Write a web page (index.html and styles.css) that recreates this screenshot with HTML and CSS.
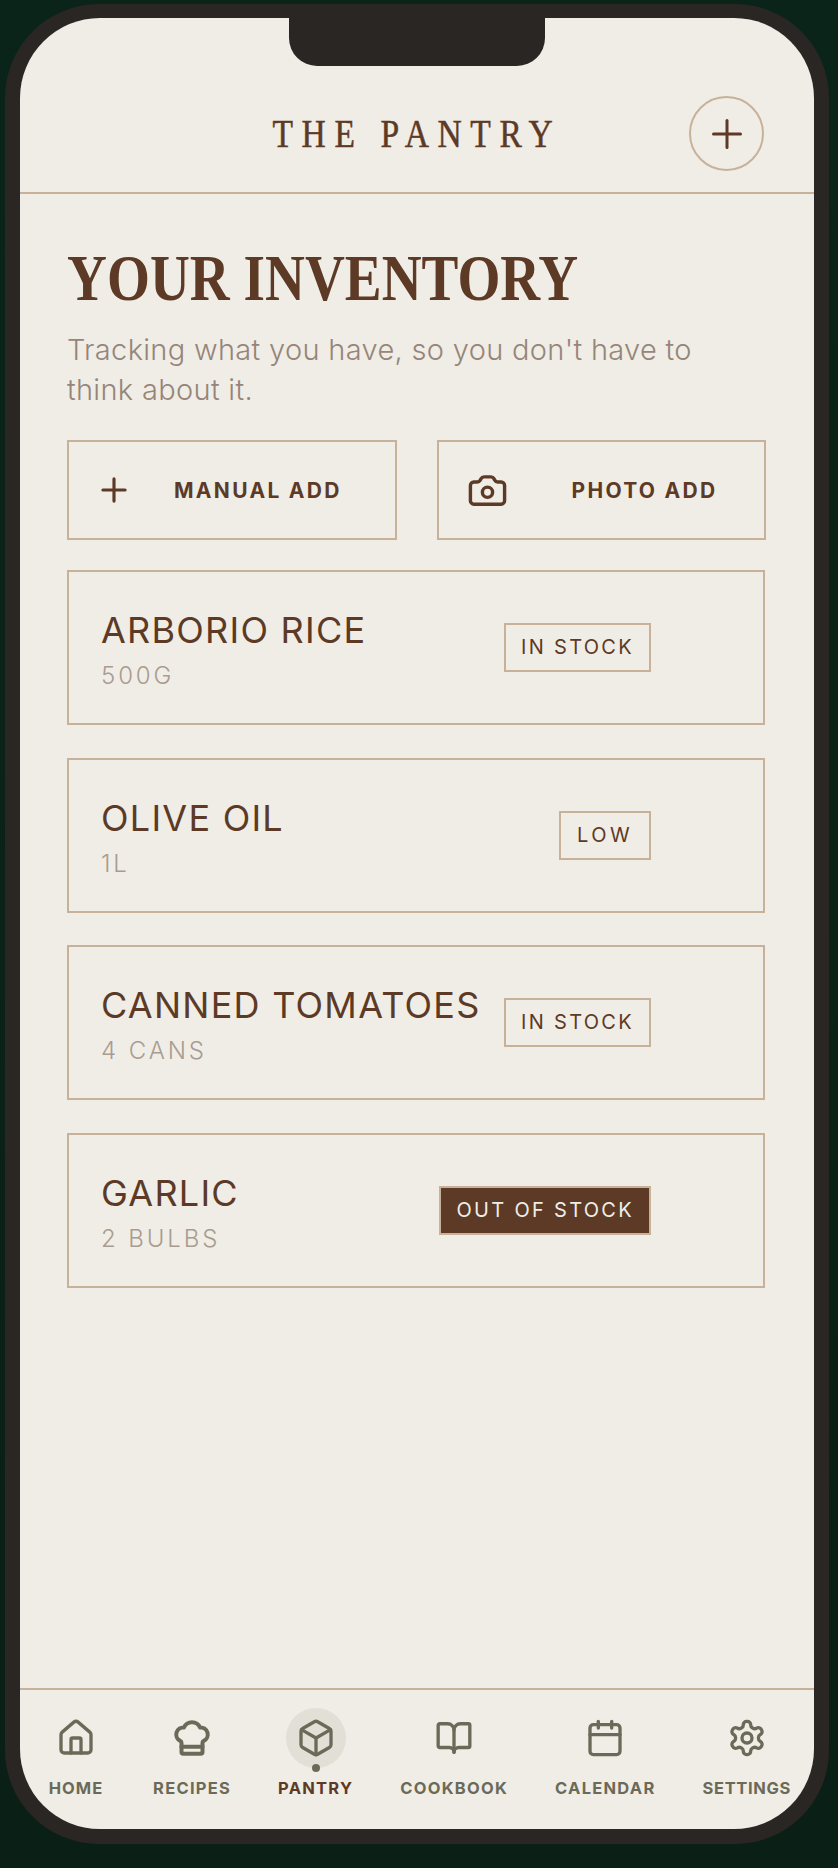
FILE: index.html
```html
<!DOCTYPE html>
<html lang="en">
<head>
  <meta charset="UTF-8" />
  <meta name="viewport" content="width=device-width, initial-scale=1" />
  <title>The Pantry</title>
  <link rel="stylesheet" href="styles.css">
</head>
<body>
  <div class="phone">
    <div class="screen">
      <div class="notch" aria-hidden="true"></div>

      <header class="top-bar">
        <div class="brand">THE PANTRY</div>
        <button class="round-add" aria-label="Add">
          <svg class="icon" viewBox="0 0 24 24"><path d="M3 12h18"/><path d="M12 3v18"/></svg>
        </button>
      </header>

      <main class="content">
        <h1 class="page-title">YOUR INVENTORY</h1>
        <p class="page-lead">Tracking what you have, so you don't have to think about it.</p>

        <div class="actions">
          <button class="action-btn manual-btn">
            <svg class="icon plus-icon" viewBox="0 0 24 24"><path d="M5 12h14"/><path d="M12 5v14"/></svg>
            <span>MANUAL ADD</span>
          </button>
          <button class="action-btn photo-btn">
            <svg class="icon camera-icon" viewBox="0 0 24 24"><path d="M13.997 4a2 2 0 0 1 1.76 1.05l.486.9A2 2 0 0 0 18.003 7H20a2 2 0 0 1 2 2v9a2 2 0 0 1-2 2H4a2 2 0 0 1-2-2V9a2 2 0 0 1 2-2h1.997a2 2 0 0 0 1.759-1.048l.489-.904A2 2 0 0 1 10.004 4z"/><circle cx="12" cy="13" r="3"/></svg>
            <span>PHOTO ADD</span>
          </button>
        </div>

        <div class="items">
          <div class="item-card">
            <div class="item-info">
              <div class="item-name">ARBORIO RICE</div>
              <div class="item-qty">500G</div>
            </div>
            <span class="badge">IN STOCK</span>
          </div>
          <div class="item-card">
            <div class="item-info">
              <div class="item-name">OLIVE OIL</div>
              <div class="item-qty">1L</div>
            </div>
            <span class="badge badge-low">LOW</span>
          </div>
          <div class="item-card">
            <div class="item-info">
              <div class="item-name">CANNED TOMATOES</div>
              <div class="item-qty">4 CANS</div>
            </div>
            <span class="badge">IN STOCK</span>
          </div>
          <div class="item-card">
            <div class="item-info">
              <div class="item-name">GARLIC</div>
              <div class="item-qty">2 BULBS</div>
            </div>
            <span class="badge badge-out">OUT OF STOCK</span>
          </div>
        </div>
      </main>

      <nav class="tab-bar">
        <a class="tab tab-home">
          <span class="tab-icon">
            <svg class="icon" viewBox="0 0 24 24"><path d="M15 21v-8a1 1 0 0 0-1-1h-4a1 1 0 0 0-1 1v8"/><path d="M3 10a2 2 0 0 1 .709-1.528l7-5.999a2 2 0 0 1 2.582 0l7 5.999A2 2 0 0 1 21 10v9a2 2 0 0 1-2 2H5a2 2 0 0 1-2-2z"/></svg>
          </span>
          <span class="tab-label">HOME</span>
        </a>
        <a class="tab">
          <span class="tab-icon">
            <svg class="icon hat-icon" viewBox="0 0 24 24"><path d="M17 21a1 1 0 0 0 1-1v-5.35c0-.457.316-.844.727-1.041a4 4 0 0 0-2.134-7.589 5 5 0 0 0-9.186 0 4 4 0 0 0-2.134 7.588c.411.198.727.585.727 1.041V20a1 1 0 0 0 1 1Z"/><path d="M6 17h12"/></svg>
          </span>
          <span class="tab-label">RECIPES</span>
        </a>
        <a class="tab tab-active">
          <span class="tab-icon">
            <svg class="icon" viewBox="0 0 24 24"><path d="M21 8a2 2 0 0 0-1-1.73l-7-4a2 2 0 0 0-2 0l-7 4A2 2 0 0 0 3 8v8a2 2 0 0 0 1 1.73l7 4a2 2 0 0 0 2 0l7-4A2 2 0 0 0 21 16Z"/><path d="m3.3 7 8.7 5 8.7-5"/><path d="M12 22V12"/></svg>
          </span>
          <span class="tab-label">PANTRY</span>
        </a>
        <a class="tab">
          <span class="tab-icon">
            <svg class="icon book-icon" viewBox="0 0 24 24"><path d="M12 7v14"/><path d="M3 18a1 1 0 0 1-1-1V4a1 1 0 0 1 1-1h5a4 4 0 0 1 4 4 4 4 0 0 1 4-4h5a1 1 0 0 1 1 1v13a1 1 0 0 1-1 1h-6a3 3 0 0 0-3 3 3 3 0 0 0-3-3z"/></svg>
          </span>
          <span class="tab-label">COOKBOOK</span>
        </a>
        <a class="tab">
          <span class="tab-icon">
            <svg class="icon" viewBox="0 0 24 24"><path d="M8 2v4"/><path d="M16 2v4"/><rect width="18" height="18" x="3" y="4" rx="2"/><path d="M3 10h18"/></svg>
          </span>
          <span class="tab-label">CALENDAR</span>
        </a>
        <a class="tab tab-settings">
          <span class="tab-icon">
            <svg class="icon" viewBox="0 0 24 24"><path d="M12.22 2h-.44a2 2 0 0 0-2 2v.18a2 2 0 0 1-1 1.73l-.43.25a2 2 0 0 1-2 0l-.15-.08a2 2 0 0 0-2.73.73l-.22.38a2 2 0 0 0 .73 2.73l.15.1a2 2 0 0 1 1 1.72v.51a2 2 0 0 1-1 1.74l-.15.09a2 2 0 0 0-.73 2.73l.22.38a2 2 0 0 0 2.73.73l.15-.08a2 2 0 0 1 2 0l.43.25a2 2 0 0 1 1 1.73V20a2 2 0 0 0 2 2h.44a2 2 0 0 0 2-2v-.18a2 2 0 0 1 1-1.73l.43-.25a2 2 0 0 1 2 0l.15.08a2 2 0 0 0 2.73-.73l.22-.39a2 2 0 0 0-.73-2.73l-.15-.08a2 2 0 0 1-1-1.74v-.5a2 2 0 0 1 1-1.74l.15-.09a2 2 0 0 0 .73-2.73l-.22-.38a2 2 0 0 0-2.73-.73l-.15.08a2 2 0 0 1-2 0l-.43-.25a2 2 0 0 1-1-1.73V4a2 2 0 0 0-2-2z"/><circle cx="12" cy="12" r="3"/></svg>
          </span>
          <span class="tab-label">SETTINGS</span>
        </a>
      </nav>
    </div>
  </div>
</body>
</html>
```

FILE: styles.css
```css
/* Reset */
* {
  margin: 0;
  padding: 0;
  box-sizing: border-box;
}
html, body {
  height: 100%;
}
body {
  background: linear-gradient(180deg, #0a241a 0%, #0a1f15 100%);
  font-family: 'Inter', sans-serif;
  color: #5c3a26;
  padding: 4px 9px 24px 5px;
  overflow: hidden;
}
button {
  font-family: inherit;
  color: inherit;
  background: none;
  cursor: pointer;
}
.icon {
  display: block;
  fill: none;
  stroke: currentColor;
  stroke-width: 2;
  stroke-linecap: round;
  stroke-linejoin: round;
}

/* Phone frame */
.phone {
  width: 824px;
  height: 1840px;
  padding: 14px 15px 15px 15px;
  background: #2a2624;
  border-radius: 94px;
}
.screen {
  position: relative;
  display: flex;
  flex-direction: column;
  height: 100%;
  background: #f0ede6;
  border-radius: 80px;
  overflow: hidden;
}
.notch {
  position: absolute;
  top: 0;
  left: 269px;
  width: 256px;
  height: 48px;
  background: #2a2624;
  border-radius: 0 0 28px 28px;
}

/* Header */
.top-bar {
  display: grid;
  grid-template-columns: 1fr auto 1fr;
  align-items: center;
  padding: 78px 50px 21px;
  border-bottom: 2px solid #c8b199;
}
.brand {
  grid-column: 2;
  font-family: 'Liberation Serif', serif;
  font-size: 39px;
  letter-spacing: 10px;
  line-height: 1;
  white-space: nowrap;
  -webkit-text-stroke: 0.5px #5c3a26;
  transform: scaleX(0.86);
}
.round-add {
  grid-column: 3;
  justify-self: end;
  display: flex;
  align-items: center;
  justify-content: center;
  width: 75px;
  height: 75px;
  border: 2px solid #c8b199;
  border-radius: 50%;
}
.round-add .icon {
  width: 36px;
  height: 36px;
}

/* Main */
.content {
  flex: 1;
  padding: 52px 48px 0 47px;
}
.page-title {
  font-family: 'Liberation Serif', serif;
  font-size: 65px;
  line-height: 65px;
  font-weight: 700;
  white-space: nowrap;
  transform: scaleX(0.85);
  transform-origin: left center;
}
.page-lead {
  max-width: 640px;
  margin-top: 19px;
  font-size: 29px;
  line-height: 39.5px;
  font-weight: 300;
  letter-spacing: 0.32px;
  color: #96857a;
}
.actions {
  display: flex;
  gap: 40px;
  margin-top: 31px;
}
.action-btn {
  flex: 1;
  display: flex;
  align-items: center;
  height: 100px;
  padding-left: 27px;
  border: 2px solid #c8b199;
  font-size: 21px;
  font-weight: 700;
  letter-spacing: 2.3px;
  white-space: nowrap;
}
.manual-btn {
  gap: 41px;
}
.photo-btn {
  gap: 64px;
}
.plus-icon {
  width: 38px;
  height: 38px;
  margin-left: -1px;
}
.camera-icon {
  width: 41px;
  height: 41px;
  margin-left: 1px;
}

/* Inventory list */
.items {
  display: flex;
  flex-direction: column;
  gap: 32.67px;
  margin-top: 30px;
}
.item-card {
  display: flex;
  align-items: center;
  justify-content: space-between;
  height: 155px;
  padding: 0 112px 0 32px;
  margin-right: 1px;
  border: 2px solid #c8b199;
}
.item-info {
  padding-top: 3px;
}
.item-name {
  font-size: 36px;
  line-height: 46px;
  font-weight: 400;
  letter-spacing: 1.25px;
  white-space: nowrap;
}
.item-qty {
  margin-top: 8px;
  font-size: 24px;
  line-height: 30px;
  font-weight: 300;
  letter-spacing: 2.9px;
  color: #a89c90;
}
.badge {
  padding: 0 15px;
  line-height: 45px;
  border: 2px solid #c8b199;
  font-size: 20px;
  letter-spacing: 2.3px;
  font-weight: 400;
  white-space: nowrap;
}
.badge-low {
  padding: 0 16px;
  letter-spacing: 3.4px;
}
.badge-out {
  background: #5c3a26;
  color: #f0ede6;
}

/* Bottom tabs */
.tab-bar {
  display: flex;
  justify-content: space-between;
  height: 141px;
  padding: 18px 23px 0 26px;
  border-top: 2px solid #c8b199;
}
.tab {
  display: flex;
  flex-direction: column;
  align-items: center;
  color: #6b6a58;
}
.tab-icon {
  position: relative;
  display: flex;
  align-items: center;
  justify-content: center;
  width: 60px;
  height: 60px;
  border-radius: 50%;
}
.tab-icon .icon {
  width: 40px;
  height: 40px;
}
.tab-icon .hat-icon {
  width: 42px;
  height: 42px;
  stroke-width: 2.3;
}
.tab-icon .book-icon {
  width: 38px;
  height: 38px;
  stroke-width: 2.1;
}
.tab-label {
  margin-top: 10px;
  font-size: 16.5px;
  line-height: 20px;
  font-weight: 700;
  letter-spacing: 1.25px;
  white-space: nowrap;
}
.tab-home .tab-label {
  letter-spacing: 1px;
}
.tab-settings .tab-label {
  letter-spacing: 0.65px;
}
.tab-active .tab-icon {
  background: #e2dfd6;
}
.tab-active .tab-icon::after {
  content: "";
  position: absolute;
  left: 26px;
  bottom: -4px;
  width: 8px;
  height: 8px;
  border-radius: 50%;
  background: #6b6a58;
}
.tab-active .tab-label {
  color: #5c3a26;
}
```
